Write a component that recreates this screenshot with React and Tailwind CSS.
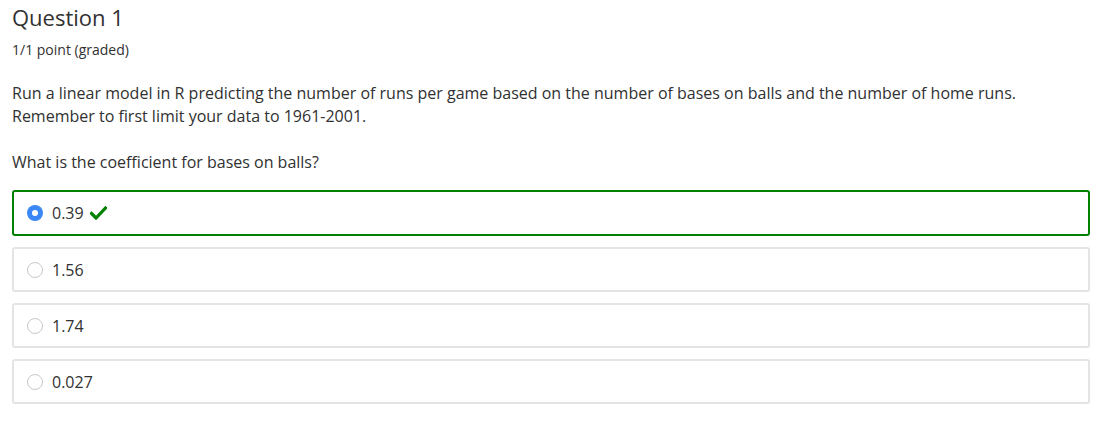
const options = [
  { label: "0.39", selected: true, correct: true },
  { label: "1.56" },
  { label: "1.74" },
  { label: "0.027" },
];

function Check() {
  return (
    <svg width="17" height="14" viewBox="0 0 17 14" className="ml-[6px]">
      <path d="M1.5 7.5 L6 12 L15.5 2" fill="none" stroke="#008100" strokeWidth="3.2" strokeLinecap="square" />
    </svg>
  );
}

export default function App() {
  return (
    <div className="bg-white min-h-screen px-3 text-[#313131] font-['Open_Sans',sans-serif]">
      <h2 className="text-[22px] leading-[28px] pt-[3px]">Question 1</h2>
      <div className="text-[14px] mt-[10px] leading-[18px]">1/1 point (graded)</div>

      <div className="text-[16px] leading-[23px] mt-[23px]">
        <p>
          Run a linear model in R predicting the number of runs per game based on the number of bases on balls and the number of home runs.
          <br />
          Remember to first limit your data to 1961-2001.
        </p>
        <p className="mt-[23px]">What is the coefficient for bases on balls?</p>
      </div>

      <div className="mt-[16px] mr-[9px] flex flex-col gap-[11px]">
        {options.map((o) => (
          <div
            key={o.label}
            className={
              o.selected
                ? "h-[46px] rounded-[3px] border-2 border-[#008100] flex items-center pl-[13px]"
                : "h-[45px] rounded-[3px] border-2 border-[#e4e4e4] flex items-center pl-[13px]"
            }
          >
            {o.selected ? (
              <span className="w-[16px] h-[16px] rounded-full bg-[#3b87f5] flex items-center justify-center">
                <span className="w-[6px] h-[6px] rounded-full bg-white" />
              </span>
            ) : (
              <span className="w-[16px] h-[16px] rounded-full border border-[#c8c8c8] bg-white" />
            )}
            <span className="ml-[9px] text-[16px]">{o.label}</span>
            {o.correct && <Check />}
          </div>
        ))}
      </div>
    </div>
  );
}
